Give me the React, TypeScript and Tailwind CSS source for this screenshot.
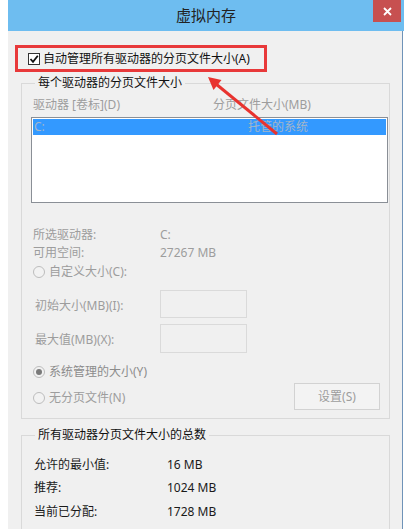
import React from "react";

const font = '"Segoe UI", "Noto Sans", "Noto Sans CJK SC", sans-serif';

function Radio({ checked }: { checked?: boolean }) {
  return (
    <span className="w-[12px] h-[12px] rounded-full border border-[#bdbdbd] bg-[#f2f2f2] flex items-center justify-center shrink-0">
      {checked && <span className="w-[6px] h-[6px] rounded-full bg-[#7a7a7a]" />}
    </span>
  );
}

export default function App() {
  return (
    <div
      className="relative w-[404px] h-[529px] overflow-hidden bg-white"
      style={{ fontFamily: font }}
    >
      <div className="ml-[8px] w-[396px] flex flex-col">
        {/* title bar */}
        <div className="relative h-[31px] bg-[#6ebdf0] flex items-center justify-center">
          <span className="text-[15px] text-[#222] leading-none">虚拟内存</span>
          <div className="absolute right-[3px] top-0 w-[28px] h-[22px] bg-[#c75050] flex items-center justify-center">
            <svg width="9" height="9" viewBox="0 0 9 9">
              <path d="M1 1 L8 8 M8 1 L1 8" stroke="white" strokeWidth="1.8" />
            </svg>
          </div>
        </div>

        {/* body */}
        <div className="h-[498px] bg-[#f0f0f0] border-r border-[#6f93b8] mr-[1px] pl-[7px] pt-[14px] text-[12px]">
          {/* highlighted checkbox */}
          <div className="w-[252px] h-[27px] border-[3px] border-[#e8393a] flex items-center pl-[10px] gap-[3px]">
            <span className="w-[12px] h-[12px] border border-[#333] bg-white flex items-center justify-center">
              <svg width="10" height="10" viewBox="0 0 10 10">
                <path d="M1.5 5 L4 7.8 L8.8 1.8" stroke="#111" strokeWidth="1.8" fill="none" />
              </svg>
            </span>
            <span className="text-[#111] leading-[16px]">自动管理所有驱动器的分页文件大小(A)</span>
          </div>

          {/* group 1 */}
          <fieldset className="mt-[3px] ml-[6px] w-[369px] border border-[#d9d9d9] pl-[9px] pr-0 pb-[8px]">
            <legend className="ml-[4px] px-[3px] text-[#111] leading-[16px]">每个驱动器的分页文件大小</legend>
            <div className="pt-[6px] flex leading-[16px] text-[#9d9d9d]">
              <span className="ml-[2px] w-[180px]">驱动器 [卷标](D)</span>
              <span>分页文件大小(MB)</span>
            </div>
            <div className="mt-[4px] w-[357px] h-[86px] border border-[#8a8f96] bg-white p-[1px]">
              <div className="h-[16px] bg-[#3399ff] flex items-center text-[#a3b5c9] leading-[16px]">
                <span className="ml-[1px] w-[214px]">C:</span>
                <span>托管的系统</span>
              </div>
            </div>

            <div className="mt-[23px] text-[#9d9d9d]">
              <div className="flex h-[18px] items-center">
                <span className="ml-[2px] w-[127px]">所选驱动器:</span>
                <span>C:</span>
              </div>
              <div className="flex h-[18px] items-center">
                <span className="ml-[2px] w-[127px]">可用空间:</span>
                <span>27267 MB</span>
              </div>
              <div className="flex h-[20px] items-center ml-[2px] gap-[4px]">
                <Radio />
                <span>自定义大小(C):</span>
              </div>
              <div className="mt-[8px] flex h-[28px] items-center">
                <span className="ml-[4px] w-[125px] pt-[3px]">初始大小(MB)(I):</span>
                <span className="w-[87px] h-[28px] border border-[#dadada] bg-[#f0f0f0]" />
              </div>
              <div className="mt-[6px] flex h-[29px] items-center">
                <span className="ml-[4px] w-[125px] pt-[3px]">最大值(MB)(X):</span>
                <span className="w-[87px] h-[29px] border border-[#dadada] bg-[#f0f0f0]" />
              </div>
              <div className="mt-[9px] flex h-[20px] items-center ml-[2px] gap-[4px] text-[#8c8c8c]">
                <Radio checked />
                <span>系统管理的大小(Y)</span>
              </div>
              <div className="mt-[1px] flex h-[27px] items-center justify-between pr-[9px]">
                <div className="flex items-center ml-[2px] gap-[4px] pt-[2px]">
                  <Radio />
                  <span>无分页文件(N)</span>
                </div>
                <div className="w-[86px] h-[27px] border border-[#d2d2d2] bg-[#f3f3f3] flex items-center justify-center">
                  设置(S)
                </div>
              </div>
            </div>
          </fieldset>

          {/* group 2 */}
          <fieldset className="mt-[8px] ml-[6px] w-[369px] border border-[#d9d9d9] pl-[9px] pt-[10px] pb-[20px]">
            <legend className="ml-[4px] px-[3px] text-[#111] leading-[16px]">所有驱动器分页文件大小的总数</legend>
            <div className="text-[#1a1a1a]">
              <div className="flex h-[23.5px] items-center">
                <span className="ml-[3px] w-[133px]">允许的最小值:</span>
                <span>16 MB</span>
              </div>
              <div className="flex h-[23.5px] items-center">
                <span className="ml-[3px] w-[133px]">推荐:</span>
                <span>1024 MB</span>
              </div>
              <div className="flex h-[23.5px] items-center">
                <span className="ml-[3px] w-[133px]">当前已分配:</span>
                <span>1728 MB</span>
              </div>
            </div>
          </fieldset>
        </div>
      </div>

      {/* red arrow annotation */}
      <svg
        className="absolute left-0 top-0 pointer-events-none"
        width="404"
        height="529"
        viewBox="0 0 404 529"
      >
        <line x1="277" y1="134" x2="216" y2="84" stroke="#e8332f" strokeWidth="3" />
        <polygon points="208,77 221.5,80 213.5,90" fill="#e8332f" />
      </svg>
    </div>
  );
}
